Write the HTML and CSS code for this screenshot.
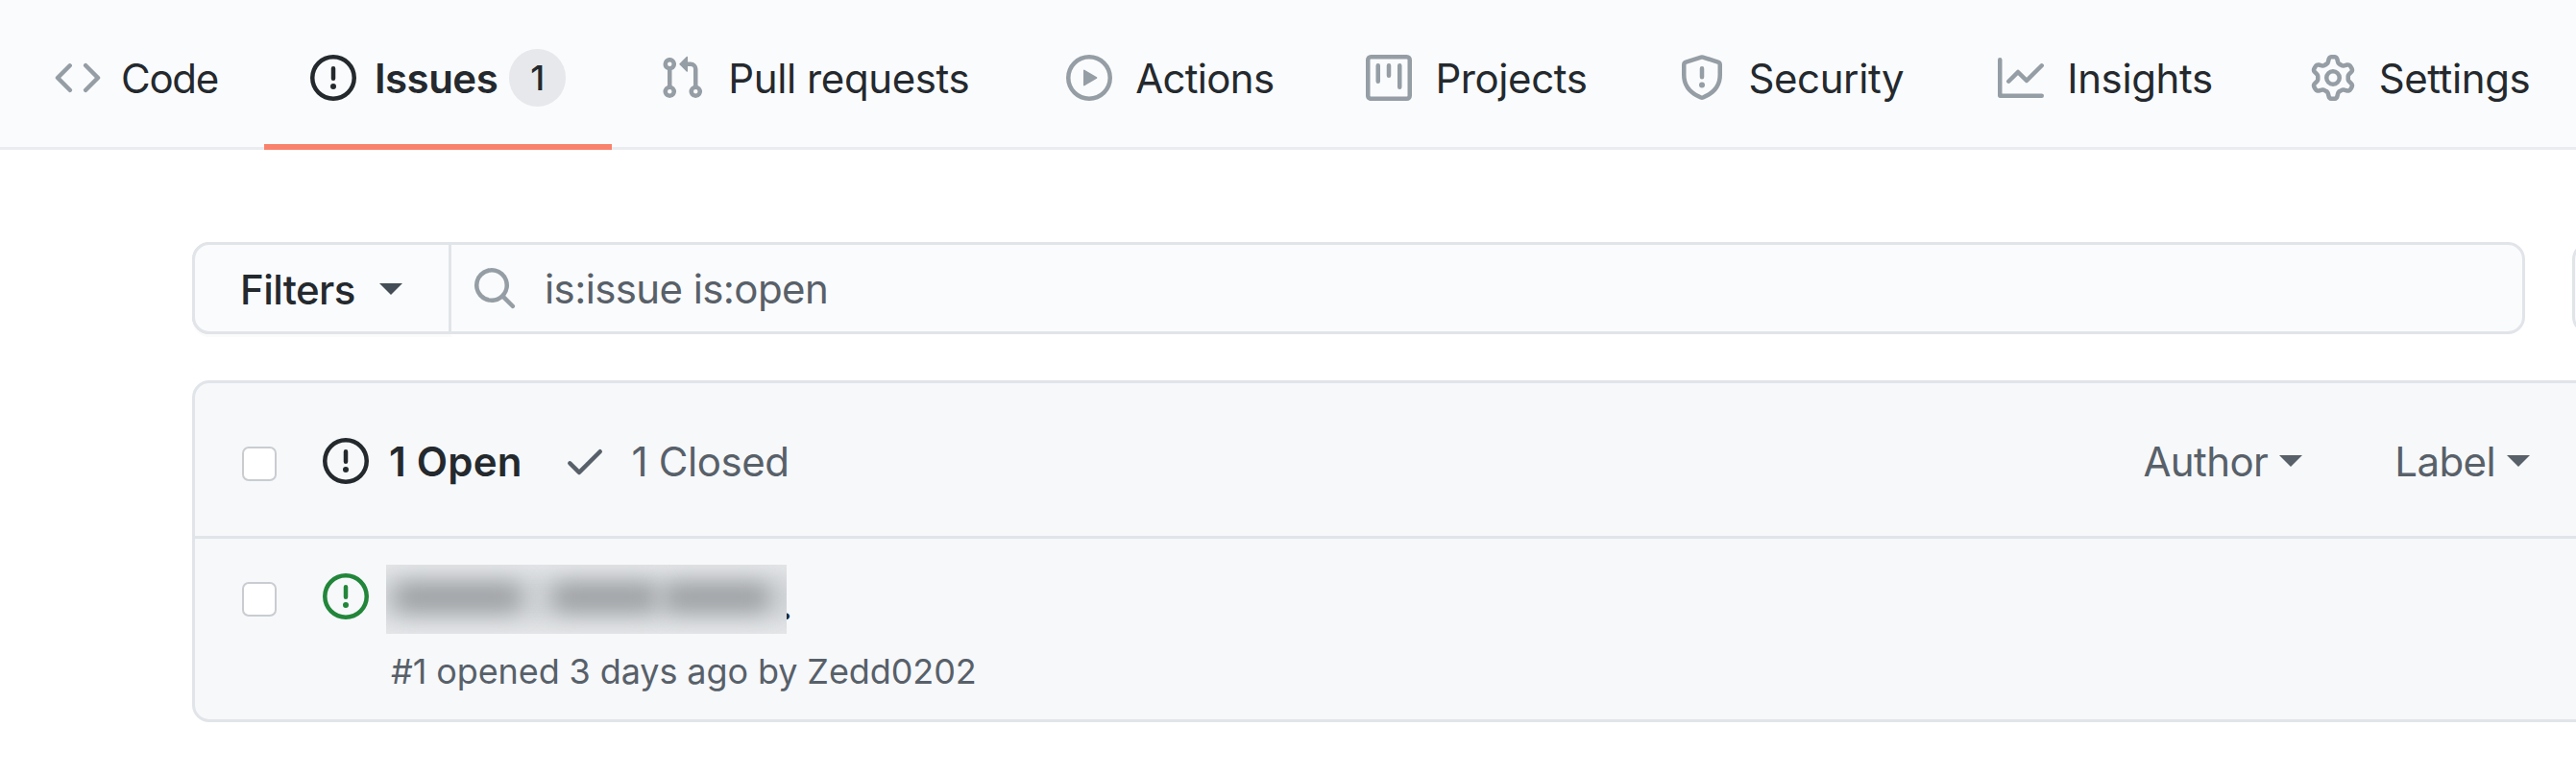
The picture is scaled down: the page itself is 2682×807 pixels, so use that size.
FILE: index.html
```html
<!DOCTYPE html>
<html lang="en">
<head>
    <meta charset="UTF-8">
    <meta name="viewport" content="width=device-width, initial-scale=1.0">
    <title>Issues</title>
    <link rel="stylesheet" href="styles.css">
</head>
<body>
    <svg class="defs" xmlns="http://www.w3.org/2000/svg">
        <symbol id="i-code" viewBox="0 0 16 16"><path fill-rule="evenodd" d="M4.72 3.22a.75.75 0 011.06 1.06L2.06 8l3.72 3.72a.75.75 0 11-1.06 1.06L.47 8.53a.75.75 0 010-1.06l4.25-4.25zm6.56 0a.75.75 0 10-1.06 1.06L13.94 8l-3.72 3.72a.75.75 0 101.06 1.06l4.25-4.25a.75.75 0 000-1.06l-4.25-4.25z"/></symbol>
        <symbol id="i-issue" viewBox="0 0 16 16"><path fill-rule="evenodd" d="M8 1.5a6.5 6.5 0 100 13 6.5 6.5 0 000-13zM0 8a8 8 0 1116 0A8 8 0 010 8zm9 3a1 1 0 11-2 0 1 1 0 012 0zm-.25-6.25a.75.75 0 00-1.5 0v3.5a.75.75 0 001.5 0v-3.5z"/></symbol>
        <symbol id="i-pr" viewBox="0 0 16 16"><path fill-rule="evenodd" d="M7.177 3.073L9.573.677A.25.25 0 0110 .854v4.792a.25.25 0 01-.427.177L7.177 3.427a.25.25 0 010-.354zM3.75 2.5a.75.75 0 100 1.5.75.75 0 000-1.5zm-2.25.75a2.25 2.25 0 113 2.122v5.256a2.251 2.251 0 11-1.5 0V5.372A2.25 2.25 0 011.5 3.25zM11 2.5h-1V4h1a1 1 0 011 1v5.628a2.251 2.251 0 101.5 0V5A2.5 2.5 0 0011 2.5zm1 10.25a.75.75 0 111.5 0 .75.75 0 01-1.5 0zM3.75 12a.75.75 0 100 1.5.75.75 0 000-1.5z"/></symbol>
        <symbol id="i-play" viewBox="0 0 16 16"><path fill-rule="evenodd" d="M1.5 8a6.5 6.5 0 1113 0 6.5 6.5 0 01-13 0zM8 0a8 8 0 100 16A8 8 0 008 0zM6.379 5.227A.25.25 0 006 5.442v5.117a.25.25 0 00.379.214l4.264-2.559a.25.25 0 000-.428L6.379 5.227z"/></symbol>
        <symbol id="i-project" viewBox="0 0 16 16"><path fill-rule="evenodd" d="M1.75 0A1.75 1.75 0 000 1.75v12.5C0 15.216.784 16 1.75 16h12.5A1.75 1.75 0 0016 14.25V1.75A1.75 1.75 0 0014.25 0H1.75zM1.5 1.75a.25.25 0 01.25-.25h12.5a.25.25 0 01.25.25v12.5a.25.25 0 01-.25.25H1.75a.25.25 0 01-.25-.25V1.75zM11.75 3a.75.75 0 00-.75.75v7.5a.75.75 0 001.5 0v-7.5a.75.75 0 00-.75-.75zm-8.25.75a.75.75 0 011.5 0v5.5a.75.75 0 01-1.5 0v-5.5zM8 3a.75.75 0 00-.75.75v3.5a.75.75 0 001.5 0v-3.5A.75.75 0 008 3z"/></symbol>
        <symbol id="i-shield" viewBox="0 0 16 16"><path fill-rule="evenodd" d="M7.467.133a1.75 1.75 0 011.066 0l5.25 1.68A1.75 1.75 0 0115 3.48V7c0 1.566-.32 3.182-1.303 4.682-.983 1.498-2.585 2.813-5.032 3.855a1.7 1.7 0 01-1.33 0c-2.447-1.042-4.049-2.357-5.032-3.855C1.32 10.182 1 8.566 1 7V3.48a1.75 1.75 0 011.217-1.667l5.25-1.68zm.61 1.429a.25.25 0 00-.153 0l-5.25 1.68a.25.25 0 00-.174.238V7c0 1.358.275 2.666 1.057 3.86.784 1.194 2.121 2.34 4.366 3.297a.2.2 0 00.154 0c2.245-.956 3.582-2.104 4.366-3.298C13.225 9.666 13.5 8.36 13.5 7V3.48a.25.25 0 00-.174-.237l-5.25-1.68zM9 10.5a1 1 0 11-2 0 1 1 0 012 0zm-.25-5.75a.75.75 0 10-1.5 0v3a.75.75 0 001.5 0v-3z"/></symbol>
        <symbol id="i-graph" viewBox="0 0 16 16"><path fill-rule="evenodd" d="M1.5 1.75a.75.75 0 00-1.5 0v12.5c0 .414.336.75.75.75h14.5a.75.75 0 000-1.5H1.5V1.75zm14.28 2.53a.75.75 0 00-1.06-1.06L10 7.94 7.53 5.47a.75.75 0 00-1.06 0L3.22 8.72a.75.75 0 001.06 1.06L7 7.06l2.47 2.47a.75.75 0 001.06 0l5.25-5.25z"/></symbol>
        <symbol id="i-gear" viewBox="0 0 16 16"><path fill-rule="evenodd" d="M7.429 1.525a6.593 6.593 0 011.142 0c.036.003.108.036.137.146l.289 1.105c.147.56.55.967.997 1.189.174.086.341.183.501.29.417.278.97.423 1.53.27l1.102-.303c.11-.03.175.016.195.046.219.31.41.641.573.989.014.031.022.11-.059.19l-.815.806c-.411.406-.562.957-.53 1.456a4.588 4.588 0 010 .582c-.032.499.119 1.05.53 1.456l.815.806c.08.08.073.159.059.19a6.494 6.494 0 01-.573.99c-.02.029-.086.074-.195.045l-1.103-.303c-.559-.153-1.112-.008-1.529.27-.16.107-.327.204-.5.29-.449.222-.851.628-.998 1.189l-.289 1.105c-.029.11-.101.143-.137.146a6.613 6.613 0 01-1.142 0c-.036-.003-.108-.037-.137-.146l-.289-1.105c-.147-.56-.55-.967-.997-1.189a4.502 4.502 0 01-.501-.29c-.417-.278-.97-.423-1.53-.27l-1.102.303c-.11.03-.175-.016-.195-.046a6.492 6.492 0 01-.573-.989c-.014-.031-.022-.11.059-.19l.815-.806c.411-.406.562-.957.53-1.456a4.587 4.587 0 010-.582c.032-.499-.119-1.05-.53-1.456l-.815-.806c-.08-.08-.073-.159-.059-.19a6.44 6.44 0 01.573-.99c.02-.029.086-.075.195-.045l1.103.303c.559.153 1.112.008 1.529-.27.16-.107.327-.204.5-.29.449-.222.851-.628.998-1.189l.289-1.105c.029-.11.101-.143.137-.146zM8 0c-.236 0-.47.01-.701.03-.743.065-1.29.615-1.458 1.261l-.29 1.106c-.017.066-.078.158-.211.224a5.994 5.994 0 00-.668.386c-.123.082-.233.09-.3.071L3.27 2.776c-.644-.177-1.392.02-1.82.63a7.977 7.977 0 00-.704 1.217c-.315.675-.111 1.422.363 1.891l.815.806c.05.048.098.147.088.294a6.084 6.084 0 000 .772c.01.147-.038.246-.088.294l-.815.806c-.474.469-.678 1.216-.363 1.891.2.428.436.835.704 1.218.428.609 1.176.806 1.82.63l1.103-.303c.066-.019.176-.011.299.071.213.143.436.272.668.386.133.066.194.158.212.224l.289 1.106c.169.646.715 1.196 1.458 1.26a8.094 8.094 0 001.402 0c.743-.064 1.29-.614 1.458-1.26l.29-1.106c.017-.066.078-.158.211-.224a5.98 5.98 0 00.668-.386c.123-.082.233-.09.3-.071l1.102.302c.644.177 1.392-.02 1.82-.63.268-.382.505-.789.704-1.217.315-.675.111-1.422-.364-1.891l-.814-.806c-.05-.048-.098-.147-.088-.294a6.1 6.1 0 000-.772c-.01-.147.039-.246.088-.294l.814-.806c.475-.469.679-1.216.364-1.891a7.992 7.992 0 00-.704-1.218c-.428-.609-1.176-.806-1.82-.63l-1.103.303c-.066.019-.176.011-.299-.071a5.991 5.991 0 00-.668-.386c-.133-.066-.194-.158-.212-.224L10.16 1.29C9.99.645 9.444.095 8.701.031A8.094 8.094 0 008 0zm1.5 8a1.5 1.5 0 11-3 0 1.5 1.5 0 013 0zM11 8a3 3 0 11-6 0 3 3 0 016 0z"/></symbol>
        <symbol id="i-search" viewBox="0 0 16 16"><path fill-rule="evenodd" d="M11.5 7a4.499 4.499 0 11-8.998 0A4.499 4.499 0 0111.5 7zm-.82 4.74a6 6 0 111.06-1.06l3.04 3.04a.75.75 0 11-1.06 1.06l-3.04-3.04z"/></symbol>
        <symbol id="i-check" viewBox="0 0 16 16"><path fill-rule="evenodd" d="M13.78 4.22a.75.75 0 010 1.06l-7.25 7.25a.75.75 0 01-1.06 0L2.22 9.28a.75.75 0 011.06-1.06L6 10.94l6.72-6.72a.75.75 0 011.06 0z"/></symbol>
    </svg>

    <!-- Repo tabs -->
    <nav class="tabs">
        <a class="tab tab-code"><svg class="icon"><use href="#i-code"/></svg><span>Code</span></a>
        <a class="tab selected"><svg class="icon"><use href="#i-issue"/></svg><span>Issues</span><span class="counter">1</span></a>
        <a class="tab tab-pr"><svg class="icon"><use href="#i-pr"/></svg><span>Pull requests</span></a>
        <a class="tab tab-actions"><svg class="icon"><use href="#i-play"/></svg><span>Actions</span></a>
        <a class="tab"><svg class="icon"><use href="#i-project"/></svg><span>Projects</span></a>
        <a class="tab"><svg class="icon"><use href="#i-shield"/></svg><span>Security</span></a>
        <a class="tab tab-insights"><svg class="icon"><use href="#i-graph"/></svg><span>Insights</span></a>
        <a class="tab tab-settings"><svg class="icon"><use href="#i-gear"/></svg><span>Settings</span></a>
    </nav>

    <main class="content">
        <div class="filter-row">
            <div class="filter-bar">
                <button class="filter-btn">Filters<span class="caret caret-dark"></span></button>
                <div class="search">
                    <svg class="icon"><use href="#i-search"/></svg>
                    <span>is:issue is:open</span>
                </div>
            </div>
            <div class="next-btn"></div>
        </div>

        <div class="issues-box">
            <div class="box-header">
                <span class="checkbox"></span>
                <svg class="icon icon-open"><use href="#i-issue"/></svg>
                <b class="open-count">1 Open</b>
                <svg class="icon icon-check"><use href="#i-check"/></svg>
                <span class="closed-count">1 Closed</span>
                <div class="header-menus">
                    <span class="menu">Author<span class="caret"></span></span>
                    <span class="menu">Label<span class="caret"></span></span>
                </div>
            </div>
            <div class="issue-row">
                <span class="checkbox"></span>
                <svg class="icon icon-green"><use href="#i-issue"/></svg>
                <div class="issue-main">
                    <div class="issue-title">
                        <div class="redacted"><i class="smear s0"></i><i class="smear s1"></i><i class="smear s2"></i><i class="smear s3"></i></div><span class="dot">.</span>
                    </div>
                    <div class="issue-meta">#1 opened 3 days ago by Zedd0202</div>
                </div>
            </div>
        </div>
    </main>
</body>
</html>
```

FILE: styles.css
```css
* {
    box-sizing: border-box;
}

body {
    margin: 0;
    height: 807px;
    overflow: hidden;
    background-color: white;
    font-family: Inter, "Liberation Sans", sans-serif;
    color: #24292e;
}

.defs {
    display: none;
}

.icon {
    width: 48px;
    height: 48px;
    flex-shrink: 0;
    fill: #959da5;
}

/* Tabs */
.tabs {
    display: flex;
    height: 156px;
    padding-left: 9px;
    background-color: #fafbfc;
    border-bottom: 3px solid #eaecef;
    font-size: 42px;
    letter-spacing: -0.4px;
}

.tab {
    display: flex;
    align-items: center;
    gap: 24px;
    height: 156px;
    padding: 6px 48px 0;
    white-space: nowrap;
}

.tab-code {
    width: 268px;
    gap: 21px;
    letter-spacing: -1.3px;
}

.tab-pr {
    margin-left: 1px;
}

.tab-actions {
    margin-left: 5px;
    letter-spacing: -0.7px;
}

.tab-insights {
    margin-left: 2px;
}

.tab-settings {
    margin-left: 5px;
}

.tab.selected {
    padding-top: 12px;
    font-weight: 600;
    border-bottom: 6px solid #f9826c;
    gap: 19px;
    letter-spacing: -0.5px;
}

.tab.selected .icon {
    fill: #24292e;
}

.counter {
    width: 59px;
    height: 60px;
    margin-left: -7px;
    border-radius: 30px;
    background-color: #e6e8eb;
    text-align: center;
    line-height: 60px;
    font-size: 36px;
    font-weight: 500;
    letter-spacing: 0;
}

/* Filter bar */
.content {
    padding: 96px 0 0 200px;
}

.filter-row {
    display: flex;
    gap: 49px;
    width: 2530px;
}

.filter-bar {
    display: flex;
    width: 2429px;
    height: 96px;
    flex-shrink: 0;
    background-color: #fafbfc;
    border: 3px solid #e1e4e8;
    border-radius: 18px;
}

.filter-btn {
    display: flex;
    align-items: center;
    width: 270px;
    height: 96px;
    margin: -3px 0 -3px -3px;
    padding: 2px 0 0 47px;
    background-color: #fafbfc;
    border: 3px solid #e1e4e8;
    border-radius: 18px 0 0 18px;
    box-shadow: 0 3px 0 rgba(27, 31, 35, 0.02);
    font-family: inherit;
    font-size: 42px;
    font-weight: 500;
    letter-spacing: -0.6px;
    color: #24292e;
}

.caret {
    display: inline-block;
    width: 0;
    height: 0;
    margin-left: 12px;
    border-style: solid;
    border-width: 12px 12px 0;
    border-color: #586069 transparent transparent;
}

.caret-dark {
    margin-left: 25px;
    border-top-color: #444d56;
}

.search {
    display: flex;
    align-items: center;
    gap: 28px;
    padding-left: 21px;
    font-size: 42px;
    letter-spacing: -0.6px;
    color: #586069;
}

.next-btn {
    width: 60px;
    height: 96px;
    flex-shrink: 0;
    border: 3px solid #e1e4e8;
    border-radius: 18px 0 0 18px;
    background-color: #fafbfc;
}

/* Issues box */
.issues-box {
    width: 2530px;
    height: 356px;
    margin-top: 48px;
    background-color: #f6f8fa;
    border: 3px solid #e1e4e8;
    border-radius: 18px;
}

.box-header {
    display: flex;
    align-items: flex-start;
    height: 162px;
    padding: 57px 0 0 49px;
    border-bottom: 3px solid #e1e4e8;
    font-size: 42px;
    letter-spacing: -0.6px;
}

.checkbox {
    display: block;
    width: 36px;
    height: 36px;
    flex-shrink: 0;
    margin-top: 9px;
    background-color: white;
    border: 2px solid #c9ccd0;
    border-radius: 7px;
}

.icon-open {
    margin-left: 48px;
    fill: #24292e;
}

.open-count {
    margin-left: 21px;
    line-height: 50px;
    font-weight: 600;
    letter-spacing: 0.2px;
}

.icon-check {
    margin-left: 41px;
    fill: #586069;
}

.closed-count {
    margin-left: 25px;
    line-height: 50px;
    letter-spacing: -0.4px;
    color: #586069;
}

.header-menus {
    display: flex;
    gap: 96px;
    margin-left: auto;
    margin-right: 93px;
    color: #586069;
}

.menu {
    display: flex;
    align-items: center;
    height: 48px;
}

/* Issue row */
.issue-row {
    display: flex;
    align-items: flex-start;
    padding: 36px 0 0 49px;
}

.issue-row .checkbox {
    margin-top: 9px;
}

.icon-green {
    margin-left: 48px;
    fill: #22863a;
}

.issue-main {
    margin-left: 18px;
}

.issue-title {
    display: flex;
    align-items: flex-end;
    height: 72px;
    margin-top: -9px;
    font-size: 42px;
    font-weight: 600;
}

/* blurred-out issue title */
.redacted {
    position: relative;
    z-index: 1;
    width: 417px;
    height: 72px;
    overflow: hidden;
    background-color: #e6e8ea;
}

.smear {
    position: absolute;
    top: 19px;
    height: 30px;
    border-radius: 14px;
    background-color: #9ea1a4;
    filter: blur(11px);
}

.s0 {
    top: 10px;
    left: -10px;
    width: 440px;
    height: 50px;
    background-color: #d0d3d6;
}

.s1 {
    left: 8px;
    width: 134px;
}

.s2 {
    left: 172px;
    width: 112px;
}

.s3 {
    left: 288px;
    width: 112px;
}

.dot {
    margin-left: -7px;
    line-height: 60px;
}

.issue-meta {
    margin: 21px 0 0 5px;
    font-size: 36px;
    line-height: 36px;
    letter-spacing: -0.1px;
    color: #586069;
}
```
